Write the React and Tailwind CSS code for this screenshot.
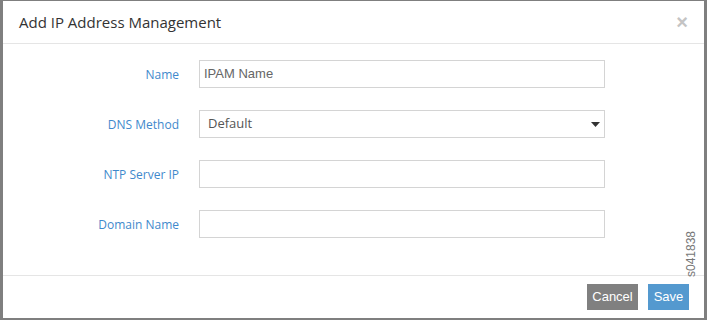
import React from "react";

const labelCls = "w-[180px] pr-[20px] pt-[2px] text-right text-[12px] text-[#3f89cc] shrink-0";
const inputCls = "w-[406px] h-[28px] border border-[#d4d4d4] bg-white flex items-center";

function Row({ label, children }) {
  return (
    <div className="flex items-center h-[28px]">
      <div className={labelCls} style={{ fontFamily: '"Open Sans", sans-serif' }}>{label}</div>
      {children}
    </div>
  );
}

export default function App() {
  return (
    <div className="w-[707px] h-[320px] bg-[#7f7f7f] pl-[3px] pt-[1px] pr-[3px] pb-[2px]">
      <div className="relative w-full h-full bg-white flex flex-col" style={{ fontFamily: '"Open Sans", sans-serif' }}>
        <div className="h-[43px] border-b border-[#e5e5e5] flex items-center justify-between pl-[16px] pr-[16px] shrink-0">
          <div className="text-[15px] text-[#333]">Add IP Address Management</div>
          <div className="text-[20px] font-bold text-[#c4c4c4] leading-none" style={{ fontFamily: '"Liberation Sans", Arial, sans-serif' }}>×</div>
        </div>
        <div className="flex-1 flex flex-col gap-[22px] pt-[16px] pl-[16px]">
          <Row label="Name">
            <div className={inputCls}>
              <span className="pl-[4px] text-[13px] text-[#666]" style={{ fontFamily: '"Liberation Sans", Arial, sans-serif' }}>IPAM Name</span>
            </div>
          </Row>
          <Row label="DNS Method">
            <div className={inputCls + " justify-between"}>
              <span className="pl-[8px] text-[13px] text-[#555]">Default</span>
              <svg width="9" height="5" viewBox="0 0 9 5" className="mr-[4px]">
                <path d="M0 0 H9 L4.5 5 Z" fill="#333" />
              </svg>
            </div>
          </Row>
          <Row label="NTP Server IP">
            <div className={inputCls} />
          </Row>
          <Row label="Domain Name">
            <div className={inputCls} />
          </Row>
        </div>
        <div className="h-[43px] border-t border-[#e5e5e5] flex items-start justify-end gap-[10px] pr-[15px] pt-[8px] shrink-0" style={{ fontFamily: '"Liberation Sans", Arial, sans-serif' }}>
          <button className="h-[26px] w-[51px] bg-[#808080] text-white text-[13px]">Cancel</button>
          <button className="h-[26px] w-[41px] bg-[#5499cf] text-white text-[13px]">Save</button>
        </div>
        <div className="absolute left-[682px] top-[229px] w-[12px] h-[48px] flex items-center justify-center">
          <span className="-rotate-90 whitespace-nowrap text-[12px] text-[#777]" style={{ fontFamily: '"Liberation Sans", Arial, sans-serif' }}>s041838</span>
        </div>
      </div>
    </div>
  );
}
